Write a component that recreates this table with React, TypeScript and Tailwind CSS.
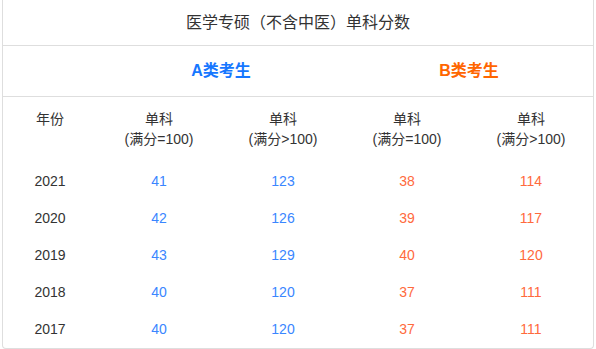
import React from 'react';

const rows = [
  { year: '2021', a1: '41', a2: '123', b1: '38', b2: '114' },
  { year: '2020', a1: '42', a2: '126', b1: '39', b2: '117' },
  { year: '2019', a1: '43', a2: '129', b1: '40', b2: '120' },
  { year: '2018', a1: '40', a2: '120', b1: '37', b2: '111' },
  { year: '2017', a1: '40', a2: '120', b1: '37', b2: '111' },
];

const subHeads = ['(满分=100)', '(满分>100)', '(满分=100)', '(满分>100)'];

const App: React.FC = () => {
  return (
    <div
      className="min-h-[349px] bg-white px-[2px] text-[#333]"
      style={{ fontFamily: '"Liberation Sans", "Noto Sans CJK SC", sans-serif' }}
    >
      <div className="rounded-b-[4px] border border-t-0 border-[#dedede]">
        {/* 标题 */}
        <div className="flex h-[46px] items-center justify-center border-b border-[#dedede] text-[16px]">
          医学专硕（不含中医）单科分数
        </div>

        {/* A/B 类 */}
        <div className="grid h-[51px] grid-cols-[94px_repeat(4,1fr)] items-center border-b border-[#dedede] text-[16px] font-bold">
          <div />
          <div className="col-span-2 text-center text-[#1677ff]">A类考生</div>
          <div className="col-span-2 text-center text-[#ff6600]">B类考生</div>
        </div>

        {/* 表头 */}
        <div className="grid grid-cols-[94px_repeat(4,1fr)] pt-[12px] pb-[14px] text-[14px] leading-[20px]">
          <div className="text-center">年份</div>
          {subHeads.map((s, i) => (
            <div key={i} className="text-center">
              <div>单科</div>
              <div>{s}</div>
            </div>
          ))}
        </div>

        {/* 数据 */}
        {rows.map((r) => (
          <div
            key={r.year}
            className="grid h-[37px] grid-cols-[94px_repeat(4,1fr)] items-center text-[14px]"
          >
            <div className="text-center">{r.year}</div>
            <div className="text-center text-[#3a86ff]">{r.a1}</div>
            <div className="text-center text-[#3a86ff]">{r.a2}</div>
            <div className="text-center text-[#ff6a3d]">{r.b1}</div>
            <div className="text-center text-[#ff6a3d]">{r.b2}</div>
          </div>
        ))}
      </div>
    </div>
  );
};

export default App;
